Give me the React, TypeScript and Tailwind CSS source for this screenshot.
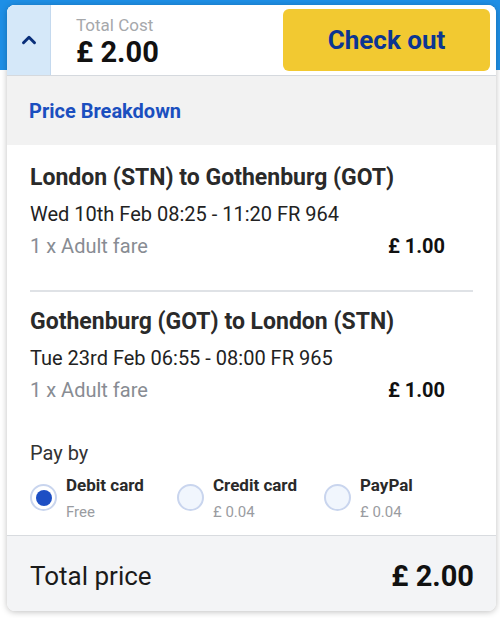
import { ChevronUp } from 'lucide-react'

const flights = [
  {
    route: 'London (STN) to Gothenburg (GOT)',
    when: 'Wed 10th Feb 08:25 - 11:20 FR 964',
    price: '£ 1.00',
  },
  {
    route: 'Gothenburg (GOT) to London (STN)',
    when: 'Tue 23rd Feb 06:55 - 08:00 FR 965',
    price: '£ 1.00',
  },
]

const methods = [
  { name: 'Debit card', fee: 'Free', selected: true },
  { name: 'Credit card', fee: '£ 0.04', selected: false },
  { name: 'PayPal', fee: '£ 0.04', selected: false },
]

function Radio({ selected }: { selected: boolean }) {
  if (selected) {
    return (
      <span className="flex h-[27px] w-[27px] shrink-0 items-center justify-center rounded-full border-2 border-[#c9d5ee] bg-white">
        <span className="h-[16px] w-[16px] rounded-full bg-[#1d4fc4]" />
      </span>
    )
  }
  return <span className="h-[27px] w-[27px] shrink-0 rounded-full border-2 border-[#c9d5ee] bg-[#f1f6fd]" />
}

export default function App() {
  return (
    <div className="relative h-[618px] w-[500px] overflow-hidden bg-[#f4f5f6] font-['Roboto',sans-serif]">
      <div className="h-[70px] bg-[#1e8fe6]" />
      <div className="h-[548px] bg-white" />

      <div className="absolute left-[7px] top-[5px] flex w-[489px] flex-col overflow-hidden rounded-lg bg-white shadow-[0_1px_6px_rgba(0,0,0,0.25)]">
        {/* top bar */}
        <div className="flex h-[71px] items-stretch border-b border-[#d5d9de] bg-white">
          <div className="flex w-[44px] items-center justify-center border-r border-[#c4d9ee] bg-[#d5e8f9]">
            <ChevronUp className="h-[22px] w-[22px] text-[#0a2f7a]" strokeWidth={3.2} />
          </div>
          <div className="flex flex-1 flex-col pl-[25px] pt-[10px]">
            <span className="text-[17px] leading-[20px] text-[#a6a8ab]">Total Cost</span>
            <span className="text-[29px] font-bold leading-[34px] text-[#111]">£ 2.00</span>
          </div>
          <div className="flex items-center pr-[6px]">
            <button className="h-[62px] w-[207px] rounded-md bg-[#f2c931] text-[26px] font-bold text-[#0c3592]">
              Check out
            </button>
          </div>
        </div>

        {/* heading */}
        <div className="flex h-[69px] items-center bg-[#f2f2f2] pl-[22px]">
          <span className="text-[20px] font-bold text-[#1b4fbf]">Price Breakdown</span>
        </div>

        {/* flights */}
        <div className="px-[23px] pt-[20px]">
          {flights.map((f, i) => (
            <div key={i} className={i === 0 ? 'border-b-2 border-[#dfe2e6] pb-[32px]' : 'pt-[17px]'}>
              <div className="text-[23px] font-bold leading-[26px] text-[#2a2a2a]">{f.route}</div>
              <div className="mt-[11px] text-[20px] leading-[24px] text-[#222]">{f.when}</div>
              <div className="mt-[8px] flex items-center justify-between pr-[28px]">
                <span className="text-[20px] leading-[24px] text-[#888c93]">1 x Adult fare</span>
                <span className="text-[20px] font-bold leading-[24px] text-[#111]">{f.price}</span>
              </div>
            </div>
          ))}

          <div className="mt-[39px] text-[20px] leading-[24px] text-[#333]">Pay by</div>
          <div className="mt-[9px] flex pb-[14px]">
            {methods.map((m) => (
              <div key={m.name} className="flex w-[147px] items-center gap-[9px]">
                <Radio selected={m.selected} />
                <div className="flex flex-col">
                  <span className="text-[17px] font-bold leading-[22px] text-[#2a2a2a]">{m.name}</span>
                  <span className="mt-[7px] text-[15px] leading-[18px] text-[#9a9ca1]">{m.fee}</span>
                </div>
              </div>
            ))}
          </div>
        </div>

        {/* footer */}
        <div className="flex h-[76px] items-center justify-between border-t border-[#d8dbdf] bg-[#f3f4f6] pl-[23px] pr-[22px] pt-[6px]">
          <span className="text-[26px] text-[#1a1a1a]">Total price</span>
          <span className="text-[29px] font-bold text-[#111]">£ 2.00</span>
        </div>
      </div>
    </div>
  )
}
